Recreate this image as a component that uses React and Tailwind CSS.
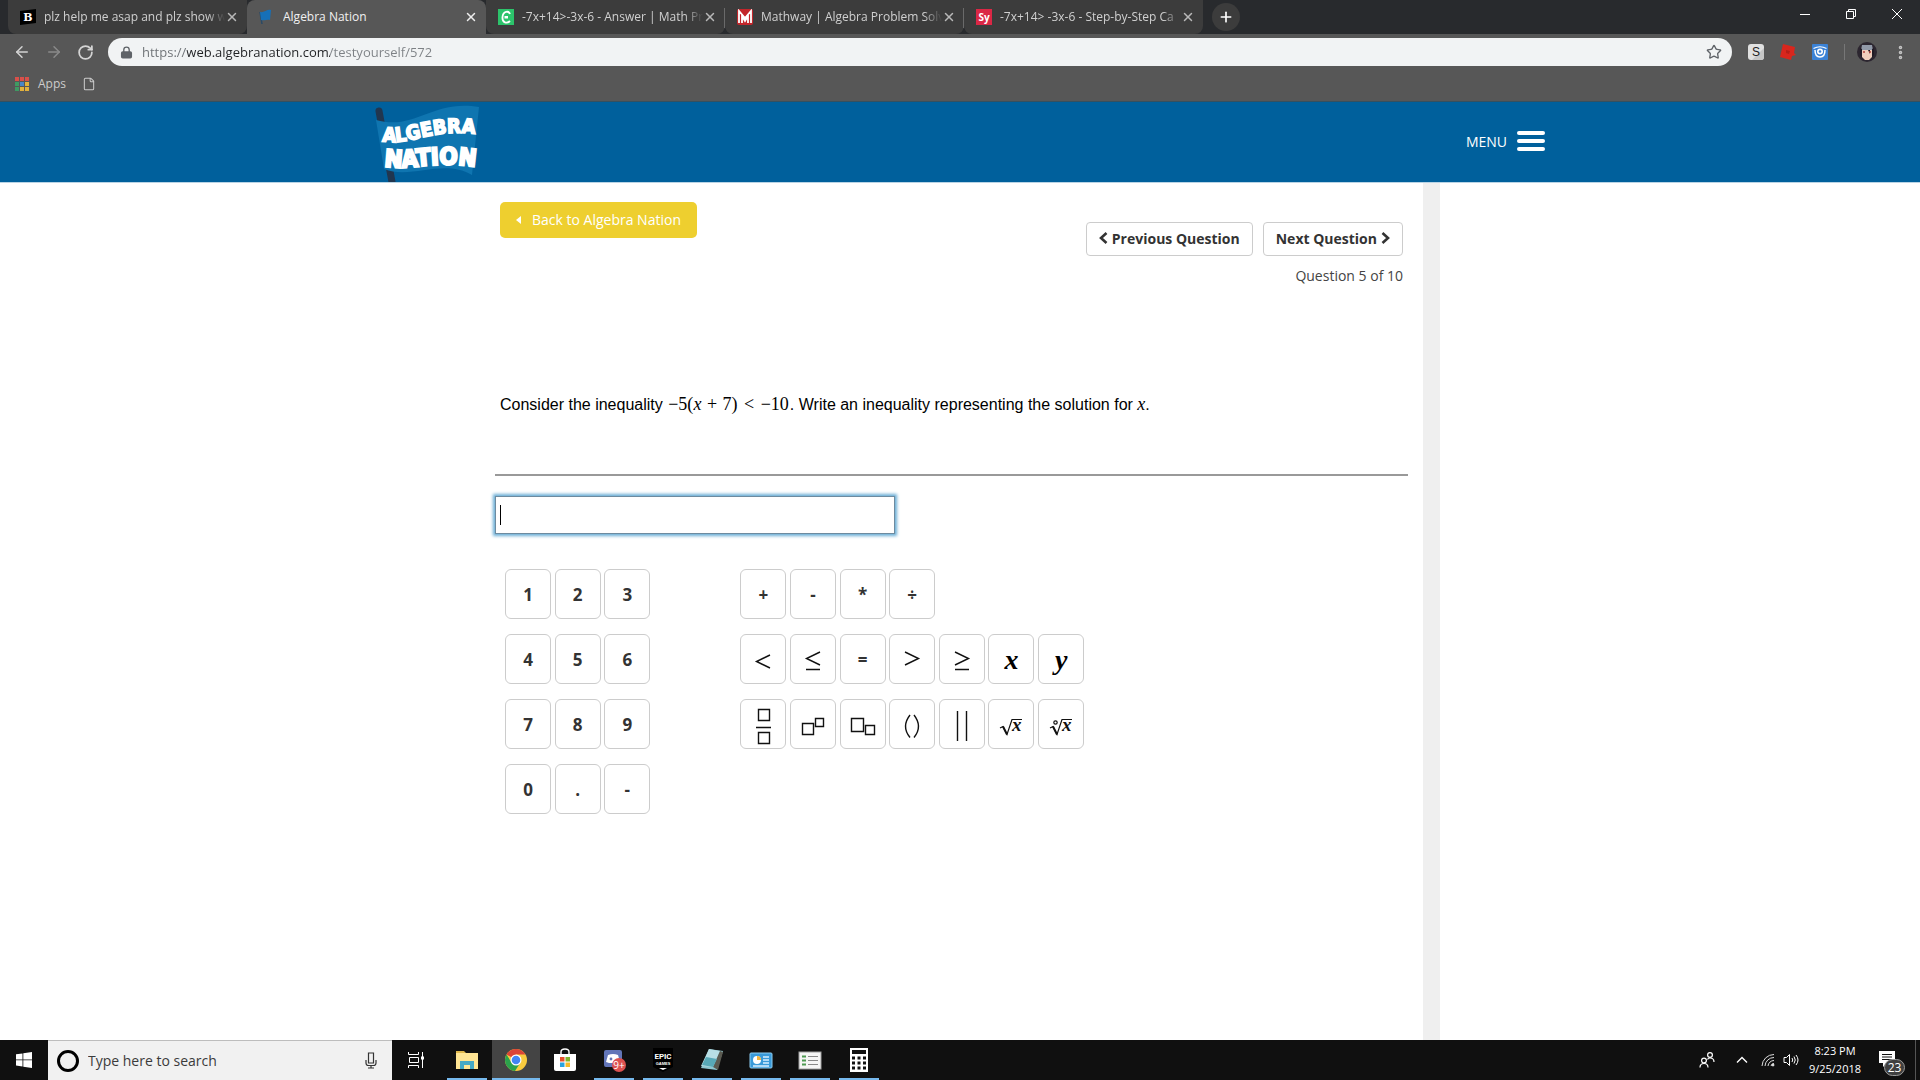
import { useState } from "react";
import { ArrowLeft, ArrowRight, File, Lock, MoreVertical, Plus, RotateCw, Star, X } from "lucide-react";

const TABS = [
  { title: "plz help me asap and plz show w", icon: "brainly" },
  { title: "Algebra Nation", icon: "flag", active: true },
  { title: "-7x+14>-3x-6 - Answer | Math Pr", icon: "cymath", divider: true },
  { title: "Mathway | Algebra Problem Solve", icon: "mathway", divider: true },
  { title: "-7x+14> -3x-6 - Step-by-Step Ca", icon: "symbolab" },
];

const NUMBER_ROWS = [
  ["1", "2", "3"],
  ["4", "5", "6"],
  ["7", "8", "9"],
  ["0", ".", "-"],
];

const SYMBOL_ROWS = [
  ["+", "-", "*", "÷"],
  ["lt", "le", "=", "gt", "ge", "x", "y"],
  ["frac", "sup", "sub", "paren", "abs", "sqrt", "root"],
];

const SYMBOL_LABELS = {
  lt: "less than",
  le: "less than or equal",
  gt: "greater than",
  ge: "greater than or equal",
  frac: "fraction",
  sup: "exponent",
  sub: "subscript",
  paren: "parentheses",
  abs: "absolute value",
  sqrt: "square root",
  root: "nth root",
};

const TASKS = [
  { name: "File Explorer", icon: "explorer", open: true },
  { name: "Google Chrome", icon: "chrome", open: true, active: true },
  { name: "Microsoft Store", icon: "store" },
  { name: "Discord", icon: "discord", open: true },
  { name: "Epic Games Launcher", icon: "epic", open: true },
  { name: "Notepad", icon: "notepad", open: true },
  { name: "Control Panel", icon: "control", open: true },
  { name: "Task list", icon: "list", open: true },
  { name: "Calculator", icon: "calc", open: true },
];

function Favicon({ name }) {
  return (
    <svg viewBox="0 0 16 16" className="size-4 shrink-0" aria-hidden="true">
      {name === "brainly" && (
        <>
          <path d="M0 2L16 0V14L0 16Z" fill="#000" />
          <text x="8" y="12" textAnchor="middle" fill="#fff" fontSize="11" fontWeight="700" fontFamily="DejaVu Serif, serif">B</text>
        </>
      )}
      {name === "flag" && (
        <>
          <path d="M1 3L3 15" stroke="#2a4a66" strokeWidth="1.5" />
          <path d="M1 3C5 4 8 0 12 1L11 11C9 10 6 12 2 11Z" fill="#1670b8" />
        </>
      )}
      {name === "cymath" && (
        <>
          <rect width="16" height="16" fill="#2cc36b" />
          <path d="M12 5C11 1.500 5 2 4.500 8C4 14 9 15 12 12" fill="none" stroke="#fff" strokeWidth="1.800" />
          <path d="M6.500 7H10V9.500H6.500Z" fill="#fff" />
        </>
      )}
      {name === "mathway" && (
        <>
          <rect width="16" height="16" rx="2" fill="#c3262b" />
          <path d="M2 14V2L8 9L14 2V14M5 14V7L8 12L11 7V14" fill="none" stroke="#fff" strokeWidth="1.800" />
        </>
      )}
      {name === "symbolab" && (
        <>
          <rect width="16" height="16" fill="#db2745" />
          <text x="8" y="11.500" textAnchor="middle" fill="#fff" fontSize="10" fontWeight="700" fontFamily="Open Sans, sans-serif">Sy</text>
        </>
      )}
    </svg>
  );
}

function BrowserTab({ tab }) {
  return (
    <div
      className={`relative flex h-[34px] w-[239px] min-w-0 items-center py-1 pl-3 pr-2 ${
        tab.active ? "rounded-t-lg bg-[#575757]" : "rounded-b-lg bg-[#3c3c3c]"
      }`}
    >
      <Favicon name={tab.icon} />
      <button
        type="button"
        className={`ml-2 min-w-0 flex-1 overflow-hidden whitespace-nowrap text-left text-[12px] leading-4 ${
          tab.active ? "text-[#f1f1f1]" : "text-[#d0d0d0] [mask-image:linear-gradient(to_right,black_90%,transparent)]"
        }`}
      >
        {tab.title}
      </button>
      <button type="button" aria-label={`Close ${tab.title}`} className={tab.active ? "text-[#eeeeee]" : "text-[#b8b8b8]"}>
        <X size={14} strokeWidth={2.5} />
      </button>
      {tab.divider && <span className="absolute right-0 top-2 h-5 w-px bg-[#6a6a6a]" />}
    </div>
  );
}

function AppsGrid() {
  const colors = ["#d9504a", "#d9504a", "#d9504a", "#3f9a63", "#4a86c8", "#e2b13c", "#3f9a63", "#e2b13c", "#e2b13c"];
  return (
    <span className="grid grid-cols-3 gap-px">
      {colors.map((color, index) => (
        <span key={index} className="size-1" style={{ backgroundColor: color }} />
      ))}
    </span>
  );
}

function BrowserChrome() {
  const [url, setUrl] = useState("https://web.algebranation.com/testyourself/572");

  return (
    <div className="bg-[#575757] font-['Open_Sans',sans-serif]">
      {/* Tab strip and window controls */}
      <div className="flex h-[34px] items-stretch bg-[#282a2d] pl-2">
        {TABS.map((tab) => (
          <BrowserTab key={tab.title} tab={tab} />
        ))}
        <button
          type="button"
          aria-label="New tab"
          className="ml-[9px] mt-[3px] flex size-7 items-center justify-center rounded-full bg-[#3c3c3c] text-white"
        >
          <Plus size={16} strokeWidth={2.5} />
        </button>
        <div className="ml-auto flex h-7 text-white">
          <button type="button" aria-label="Minimize" className="flex w-[46px] items-center justify-center">
            <svg viewBox="0 0 10 10" className="size-[10px]"><path d="M0 5.500H10" stroke="currentColor" /></svg>
          </button>
          <button type="button" aria-label="Restore" className="flex w-[46px] items-center justify-center">
            <svg viewBox="0 0 10 10" className="size-[10px]">
              <path d="M0.500 2.500H7.500V9.500H0.500ZM2.500 2.500V0.500H9.500V7.500H7.500" fill="none" stroke="currentColor" />
            </svg>
          </button>
          <button type="button" aria-label="Close" className="flex w-[46px] items-center justify-center">
            <svg viewBox="0 0 10 10" className="size-[10px]"><path d="M0 0L10 10M10 0L0 10" stroke="currentColor" /></svg>
          </button>
        </div>
      </div>

      {/* Toolbar */}
      <div className="flex h-9 items-center pl-[13px] pr-[11px]">
        <div className="flex w-[95px] items-center gap-[14px] text-[#d4d4d4]">
          <button type="button" aria-label="Back"><ArrowLeft size={18} /></button>
          <button type="button" aria-label="Forward" className="text-[#8a8a8a]"><ArrowRight size={18} /></button>
          <button type="button" aria-label="Reload"><RotateCw size={17} strokeWidth={2.5} /></button>
        </div>
        <div className="flex h-7 flex-1 items-center rounded-full bg-[#f1f3f4] pl-3 pr-[10px]">
          <Lock size={13} strokeWidth={2.5} className="text-[#5f6368] [&_rect]:fill-[#5f6368]" />
          <input
            type="text"
            aria-label="Address"
            value={url}
            onChange={(event) => setUrl(event.target.value)}
            className="ml-[9px] flex-1 bg-[linear-gradient(to_right,#6b6f73_45px,#202124_45px,#202124_188px,#7d8185_188px)] bg-clip-text text-[13px] leading-5 text-transparent outline-none"
          />
          <button type="button" aria-label="Bookmark this page"><Star size={16} className="text-[#5f6368]" /></button>
        </div>
        <div className="ml-4 flex items-center gap-4">
          <svg viewBox="0 0 16 16" className="size-4">
            <rect width="16" height="16" rx="3" fill="#e0e0e0" />
            <path d="M16 4V13Q16 16 13 16H4Z" fill="#c6c6c6" />
            <text x="8" y="12" textAnchor="middle" fontSize="12" fill="#222" fontFamily="Liberation Sans, sans-serif">S</text>
          </svg>
          <svg viewBox="0 0 16 16" className="size-4">
            <path d="M3 0L15 3L14 9L16 11L12 12L11 16L0 13Z" fill="#d8261d" />
            <path d="M6 6L10 7L9 10L6 9Z" fill="#b51e18" />
          </svg>
          <svg viewBox="0 0 16 16" className="size-4">
            <rect width="16" height="16" rx="1" fill="#3b82d6" />
            <path d="M1.500 4.500Q8 1 14.500 4.500" fill="none" stroke="#fff" strokeWidth="1.200" />
            <path d="M3 6Q3 13 8 13Q13 13 13 6" fill="none" stroke="#fff" strokeWidth="1.500" />
            <circle cx="8" cy="7.500" r="3" fill="#fff" />
            <circle cx="8" cy="7.500" r="1.300" fill="#3b82d6" />
          </svg>
          <span className="h-4 w-px bg-[#777]" />
          <div className="flex items-center gap-[15px]">
            <svg viewBox="0 0 20 20" className="-ml-1 size-5">
              <circle cx="10" cy="10" r="10" fill="#2c2630" />
              <path d="M5 3L15 3L16 8H4Z" fill="#9199a8" />
              <path d="M4 8H16L15 15L12 18H8L5 15Z" fill="#efcdbb" />
              <path d="M3 6L5 7V16L3 13ZM17 6L15 7V16L17 13ZM11 8L13 12V8Z" fill="#201b25" />
              <path d="M6 10H8M12 10H14" stroke="#b3423c" strokeWidth="1.500" />
            </svg>
            <button type="button" aria-label="Menu" className="text-[#c4c4c4]"><MoreVertical size={17} strokeWidth={3} /></button>
          </div>
        </div>
      </div>

      {/* Bookmarks */}
      <div className="flex h-8 items-center border-b border-[#35505f] pb-[3px] pl-[15px] text-[12px] text-[#cccccc]">
        <a href="#apps" className="flex items-center gap-[9px]">
          <AppsGrid />
          Apps
        </a>
        <a href="#bookmark" aria-label="Bookmark" className="ml-4"><File size={14} strokeWidth={1.75} /></a>
      </div>
    </div>
  );
}

function Logo() {
  return (
    <svg viewBox="0 0 108 80" className="h-20 w-[108px]" role="img" aria-label="Algebra Nation">
      <path d="M4 9L17 80" stroke="#21364f" strokeWidth="7" strokeLinecap="round" />
      <path d="M1 18C40 29 58 -3 104 5L97 73C68 56 36 78 9 67Z" fill="#0f75b0" />
      <path id="logo-top" d="M7 39C36 45 62 23 112 34" fill="none" />
      <path id="logo-bottom" d="M9 64C38 70 60 56 112 67" fill="none" />
      <g fill="#fff" stroke="#fff" fontWeight="700" fontFamily="DejaVu Sans Condensed, sans-serif">
        <text fontSize="20" strokeWidth="1.600"><textPath href="#logo-top">ALGEBRA</textPath></text>
        <text fontSize="24" strokeWidth="2.200"><textPath href="#logo-bottom">NATION</textPath></text>
      </g>
    </svg>
  );
}

function SiteHeader() {
  return (
    <header className="border-b border-[#b9d4e5] bg-[#00609c] font-['Open_Sans',sans-serif]">
      <div className="mx-auto flex max-w-[1170px] items-center justify-between">
        <a href="#home"><Logo /></a>
        <button type="button" className="flex items-center gap-[10px] pb-[2px] text-[14px] text-white">
          MENU
          <span className="flex w-7 flex-col gap-1">
            <span className="h-1 rounded-sm bg-white" />
            <span className="h-1 rounded-sm bg-white" />
            <span className="h-1 rounded-sm bg-white" />
          </span>
        </button>
      </div>
    </header>
  );
}

function Chevron({ d }) {
  return (
    <svg viewBox="0 0 9 12" className="h-3 w-[9px]" fill="none" stroke="currentColor" strokeWidth="2.600">
      <path d={d} />
    </svg>
  );
}

function Radical({ index }) {
  return (
    <svg viewBox="0 0 24 20" className="mt-1 h-5 w-6 overflow-visible">
      <path d="M1 11L4 9.500L8 17.500L13 2.500H23" fill="none" stroke="#111" strokeWidth="1.200" />
      <path d="M4 9.500L8 17.500" stroke="#111" strokeWidth="2" />
      {index && <circle cx="6.500" cy="5.500" r="1.700" fill="none" stroke="#111" strokeWidth="1.200" />}
      <text x="13" y="14" fontSize="19" fontStyle="italic" fontWeight="700" fontFamily="Liberation Serif, serif" fill="#111">x</text>
    </svg>
  );
}

function Symbol({ name }) {
  if (name === "x" || name === "y")
    return <span className="font-['Liberation_Serif',serif] text-[28px] italic leading-6 text-black">{name}</span>;
  if (name === "sqrt") return <Radical />;
  if (name === "root") return <Radical index />;

  const shapes = {
    lt: "M22 14L8.500 20.500L22 27",
    le: "M22 11L8.500 17.500L22 24M8 28.500H22",
    gt: "M8 11L21.500 17.500L8 24",
    ge: "M8 11L21.500 17.500L8 24M8 28.500H22",
    frac: "M10.500 3.500H21.500V14.500H10.500ZM8 21.500H23M10.500 26.500H21.500V37.500H10.500Z",
    sup: "M4.500 17.500H15.500V28.500H4.500ZM17.500 12.500H25.500V20.500H17.500Z",
    sub: "M3.500 12.500H15.500V25.500H3.500ZM17.500 19.500H26.500V28.500H17.500Z",
    paren: "M13 9Q4 20.500 13 31.500M17 9Q26 20.500 17 31.500",
    abs: "M10.500 5V35M19.500 5V35",
  };
  return (
    <svg viewBox="0 0 30 37" className="h-[37px] w-[30px] overflow-visible" fill="none" stroke="#111" strokeWidth="1.400">
      <path d={shapes[name]} />
    </svg>
  );
}

function Key({ value, onPress }) {
  const label = SYMBOL_LABELS[value];
  return (
    <button
      type="button"
      aria-label={label}
      onClick={() => onPress(value)}
      className="inline-flex h-[50px] w-[46px] items-center justify-center rounded-md border border-[#cccccc] bg-white pt-px align-top text-[17px] font-bold text-[#333333]"
    >
      {label || value === "x" || value === "y" ? <Symbol name={value} /> : value}
    </button>
  );
}

function KeyRows({ rows, onPress }) {
  return (
    <div className="flex flex-col gap-[15px] text-[14px]">
      {rows.map((row) => (
        <div key={row.join("")} className="whitespace-nowrap">
          {row.map((value) => (
            <span key={value}>
              <Key value={value} onPress={onPress} />{" "}
            </span>
          ))}
        </div>
      ))}
    </div>
  );
}

function Question() {
  const [answer, setAnswer] = useState("");
  const press = (value) => setAnswer((current) => current + value);
  const navButton =
    "flex h-[34px] items-center gap-1 rounded border border-[#cccccc] bg-white px-3 pb-[2px] text-[14px] font-bold text-[#333333]";

  return (
    <div className="mx-auto flex w-full max-w-[960px] flex-1 font-['Open_Sans',sans-serif]">
      <div className="min-w-0 flex-1 px-[15px] pt-[19px]">
        <div className="flex items-start justify-between px-[5px]">
          <a href="#back" className="flex h-9 items-center gap-[10px] rounded-[5px] bg-[#eecf2f] px-4 pb-[2px] text-[14px] text-white">
            <svg viewBox="0 0 6 8" className="mt-px h-2 w-[6px]" fill="currentColor"><path d="M0 4L5 0V8Z" /></svg>
            Back to Algebra Nation
          </a>
          <div className="flex flex-col items-end gap-[10px] pt-5">
            <div className="flex gap-[10px]">
              <button type="button" className={navButton}>
                <Chevron d="M7.500 1L2 6L7.500 11" />
                Previous Question
              </button>
              <button type="button" className={navButton}>
                Next Question
                <Chevron d="M1.500 1L7 6L1.500 11" />
              </button>
            </div>
            <p className="text-[14px] leading-5 text-[#444444]">Question 5 of 10</p>
          </div>
        </div>

        <p className="mt-[108px] px-[5px] font-['Liberation_Sans',sans-serif] text-[16px] leading-5 text-black">
          Consider the inequality{" "}
          <span className="mx-px font-['Liberation_Serif',serif] text-[18px]">
            −5(<i>x</i> <span className="mx-px">+</span> 7) <span className="mx-[2px]">&lt;</span> −10
          </span>
          . Write an inequality representing the solution for{" "}
          <i className="font-['Liberation_Serif',serif] text-[18px]">x</i>.
        </p>

        <hr className="mt-[59px] h-[2px] border-0 bg-[#999999]" />

        <div className="relative mt-5 w-[400px] max-w-full">
          <input
            type="text"
            aria-label="Answer"
            value={answer}
            onChange={(event) => setAnswer(event.target.value)}
            className="block h-[38px] w-full border border-[#6d8ba0] bg-white px-1 text-[18px] caret-transparent shadow-[0_0_3px_2px_#6aaed6] outline-none"
          />
          {answer === "" && <span className="absolute left-[5px] top-[9px] h-5 w-px bg-black" />}
        </div>

        <div className="mt-[35px] flex gap-[90px] pl-[10px]">
          <KeyRows rows={NUMBER_ROWS} onPress={press} />
          <KeyRows rows={SYMBOL_ROWS} onPress={press} />
        </div>
      </div>
      <div className="w-[17px] bg-[#efefef]" />
    </div>
  );
}

function TaskIcon({ name }) {
  return (
    <svg viewBox="0 0 24 24" className="size-6" aria-hidden="true">
      {name === "explorer" && (
        <>
          <path d="M1 3H9L11 5H22V9H1Z" fill="#e0b84c" />
          <rect x="1" y="5" width="22" height="16" fill="#ffe594" />
          <path d="M5 21V13H19V21H15V17H9V21Z" fill="#46a9c6" />
        </>
      )}
      {name === "chrome" && (
        <>
          <circle cx="12" cy="12" r="11" fill="#f9cb3e" />
          <path d="M12 12L2.500 6.500A11 11 0 0 1 21.500 6.500H12Z" fill="#db4437" />
          <path d="M2.500 6.500A11 11 0 0 0 11 23L16.500 14.500L7.500 14.500Z" fill="#2ba24c" />
          <circle cx="12" cy="12" r="5.500" fill="#fff" />
          <circle cx="12" cy="12" r="4.300" fill="#4285f4" />
        </>
      )}
      {name === "store" && (
        <>
          <path d="M8 7V4Q8 1 12 1Q16 1 16 4V7" fill="none" stroke="#fff" strokeWidth="1.400" />
          <path d="M1 6H23V21Q23 23 21 23H3Q1 23 1 21Z" fill="#fff" />
          <path d="M7 9H11.500V13.500H7Z" fill="#e8502c" />
          <path d="M12.500 9H17V13.500H12.500Z" fill="#80b52c" />
          <path d="M7 14.500H11.500V19H7Z" fill="#29a3e0" />
          <path d="M12.500 14.500H17V19H12.500Z" fill="#f6ba28" />
        </>
      )}
      {name === "discord" && (
        <>
          <path d="M4 2H18Q20 2 20 4V22L15 19H4Q2 19 2 17V4Q2 2 4 2Z" fill="#6275b8" />
          <path d="M6 7Q11 5 16 7L18 14L15 15H7L4 14Z" fill="#fff" />
          <circle cx="9" cy="11" r="1.400" fill="#6275b8" />
          <circle cx="17" cy="17" r="7" fill="#dc5150" />
          <text x="17" y="20.500" textAnchor="middle" fontSize="10" fill="#fff" fontFamily="Open Sans, sans-serif">9+</text>
        </>
      )}
      {name === "epic" && (
        <>
          <path d="M2 0H22V19L12 24L2 19Z" fill="#000" />
          <text x="12" y="11" textAnchor="middle" fontSize="8" fontWeight="700" fill="#fff" fontFamily="Roboto, sans-serif">EPIC</text>
          <text x="12" y="17" textAnchor="middle" fontSize="4" fontWeight="700" fill="#fff" fontFamily="Liberation Sans, sans-serif">GAMES</text>
          <path d="M8 20L12 22L16 20Z" fill="#fff" />
        </>
      )}
      {name === "notepad" && (
        <>
          <path d="M9 1L23 3L17 22L1 20Z" fill="#8dc6cf" />
          <path d="M9 1L20 3L13 19L1 18Z" fill="#b8dfe5" />
          <path d="M20 3L23 4L18 22L13 19Z" fill="#5b5a50" />
          <path d="M6 9L17 11L13 19L2 17Z" fill="#58a9b7" />
        </>
      )}
      {name === "control" && (
        <>
          <rect x="1" y="5" width="22" height="15" rx="1" fill="#3a9ad9" stroke="#8ccdf2" />
          <circle cx="8" cy="12" r="4" fill="#fff" />
          <path d="M8 12V8A4 4 0 0 1 12 12Z" fill="#f3b33c" />
          <path d="M14 9H20M14 12H20M14 15H20M4 18H20" stroke="#d9f0ff" strokeWidth="1.300" />
        </>
      )}
      {name === "list" && (
        <>
          <rect x="1" y="4" width="22" height="17" fill="#f5f5f5" stroke="#a0a0a0" />
          <path d="M4 8.500H8M4 12.500H8M4 16.500H8" stroke="#4e9a52" strokeWidth="2" />
          <path d="M10 8.500H20M10 12.500H20M10 16.500H20" stroke="#888" />
        </>
      )}
      {name === "calc" && (
        <>
          <rect x="3" y="0" width="18" height="24" fill="#fff" />
          <rect x="5" y="2" width="14" height="4" fill="#111" />
          <path d="M5 10H19M5 15H19M5 20H19" stroke="#111" strokeWidth="3" strokeDasharray="3 2.500" />
        </>
      )}
    </svg>
  );
}

function Taskbar() {
  return (
    <footer className="flex h-10 items-stretch bg-[#101010] font-['Open_Sans',sans-serif] text-white">
      <button type="button" aria-label="Start" className="flex w-12 items-center justify-center">
        <svg viewBox="0 0 16 16" className="size-4" fill="#fff">
          <path d="M0 2.300L6.500 1.400V7.500H0ZM7.300 1.300L16 0V7.500H7.300ZM0 8.300H6.500V14.500L0 13.600ZM7.300 8.300H16V16L7.300 14.700Z" />
        </svg>
      </button>
      <label className="flex w-[344px] items-center border-t border-[#bdbdbd] bg-[#f1f1f1] pl-[9px] pr-[15px]">
        <span className="size-[22px] rounded-full border-[3px] border-black" />
        <input
          type="text"
          aria-label="Search"
          placeholder="Type here to search"
          className="ml-[9px] min-w-0 flex-1 bg-transparent text-[14px] text-black outline-none placeholder:text-[#3b3b3b]"
        />
        <svg viewBox="0 0 12 17" className="h-[17px] w-3" fill="none" stroke="#333" strokeWidth="1.200">
          <path d="M3.500 1H8.500V11H3.500ZM1 8V11Q1 13.500 3.500 13.500H8.500Q11 13.500 11 11V8M6 13.500V16M3 16H9" />
        </svg>
      </label>
      <button type="button" aria-label="Task view" className="mr-[3px] flex w-12 items-center justify-center">
        <svg viewBox="0 0 16 16" className="size-4" fill="none" stroke="#fff">
          <path d="M0.500 0V2.500H10.500V0M0.500 16V13.500H10.500V16M1.500 5.500H10.500V10.500H1.500ZM14.500 0V16" />
          <path d="M13 6H16" strokeWidth="3" />
        </svg>
      </button>
      <div className="flex gap-px">
        {TASKS.map((task) => (
          <button
            key={task.name}
            type="button"
            aria-label={task.name}
            className={`relative flex w-12 items-center justify-center ${task.active ? "bg-[#444444]" : ""}`}
          >
            <TaskIcon name={task.icon} />
            {task.open && (
              <span className={`absolute bottom-0 h-[2px] bg-[#76b9ed] ${task.active ? "inset-x-0" : "inset-x-1"}`} />
            )}
          </button>
        ))}
      </div>

      <div className="ml-auto flex items-center pr-1">
        <svg viewBox="0 0 16 16" className="mr-[21px] size-4" fill="none" stroke="#fff" strokeWidth="1.200">
          <circle cx="5" cy="8.500" r="2.400" />
          <path d="M1 15.500Q1 11.500 5 11.500Q9 11.500 9 15.500M8.500 7.500Q9 6 11 6Q15 6 15 10" />
          <circle cx="11" cy="3" r="2.400" />
        </svg>
        <svg viewBox="0 0 12 12" className="mr-[13px] size-3" fill="none" stroke="#fff" strokeWidth="1.400">
          <path d="M1 8.500L6 3.500L11 8.500" />
        </svg>
        <svg viewBox="0 0 14 14" className="mr-2 size-[14px]" fill="none" stroke="#ddd">
          <path d="M1 13A12 12 0 0 1 13 1.500M4 13A9 9 0 0 1 13 4.500M7 13A6 6 0 0 1 13 7.500M10 13A3 3 0 0 1 13 10.500" />
          <circle cx="12" cy="12" r="1" fill="#fff" />
        </svg>
        <svg viewBox="0 0 17 14" className="mr-[7px] h-[14px] w-[17px]" fill="none" stroke="#fff">
          <path d="M1 4.500H3.500L6.500 1.500V12.500L3.500 9.500H1ZM9 5Q10.500 7 9 9M11 3.500Q13.500 7 11 10.500M13 2Q17 7 13 12" />
        </svg>
        <div className="w-[56px] whitespace-nowrap text-center text-[11px] leading-[18px]">
          <div>8:23 PM</div>
          <div>9/25/2018</div>
        </div>
        <button type="button" aria-label="Notifications" className="relative ml-4 h-8 w-[26px]">
          <svg viewBox="0 0 16 16" className="absolute left-0 top-[7px] size-4">
            <path d="M0 0H16V12H8L4 16V12H0Z" fill="#fff" />
            <path d="M3 3.500H13M3 6H13M3 8.500H13" stroke="#111" />
          </svg>
          <span className="absolute bottom-0 left-[5px] flex h-[17px] w-[21px] items-center justify-center rounded-full border border-[#9a9a9a] bg-[#404040] text-[12px]">
            23
          </span>
        </button>
        <span className="ml-[10px] h-10 w-px bg-[#555]" />
      </div>
    </footer>
  );
}

export default function App() {
  return (
    <div className="flex min-h-screen flex-col bg-white">
      <BrowserChrome />
      <SiteHeader />
      <main className="flex flex-1 flex-col">
        <Question />
      </main>
      <Taskbar />
    </div>
  );
}
